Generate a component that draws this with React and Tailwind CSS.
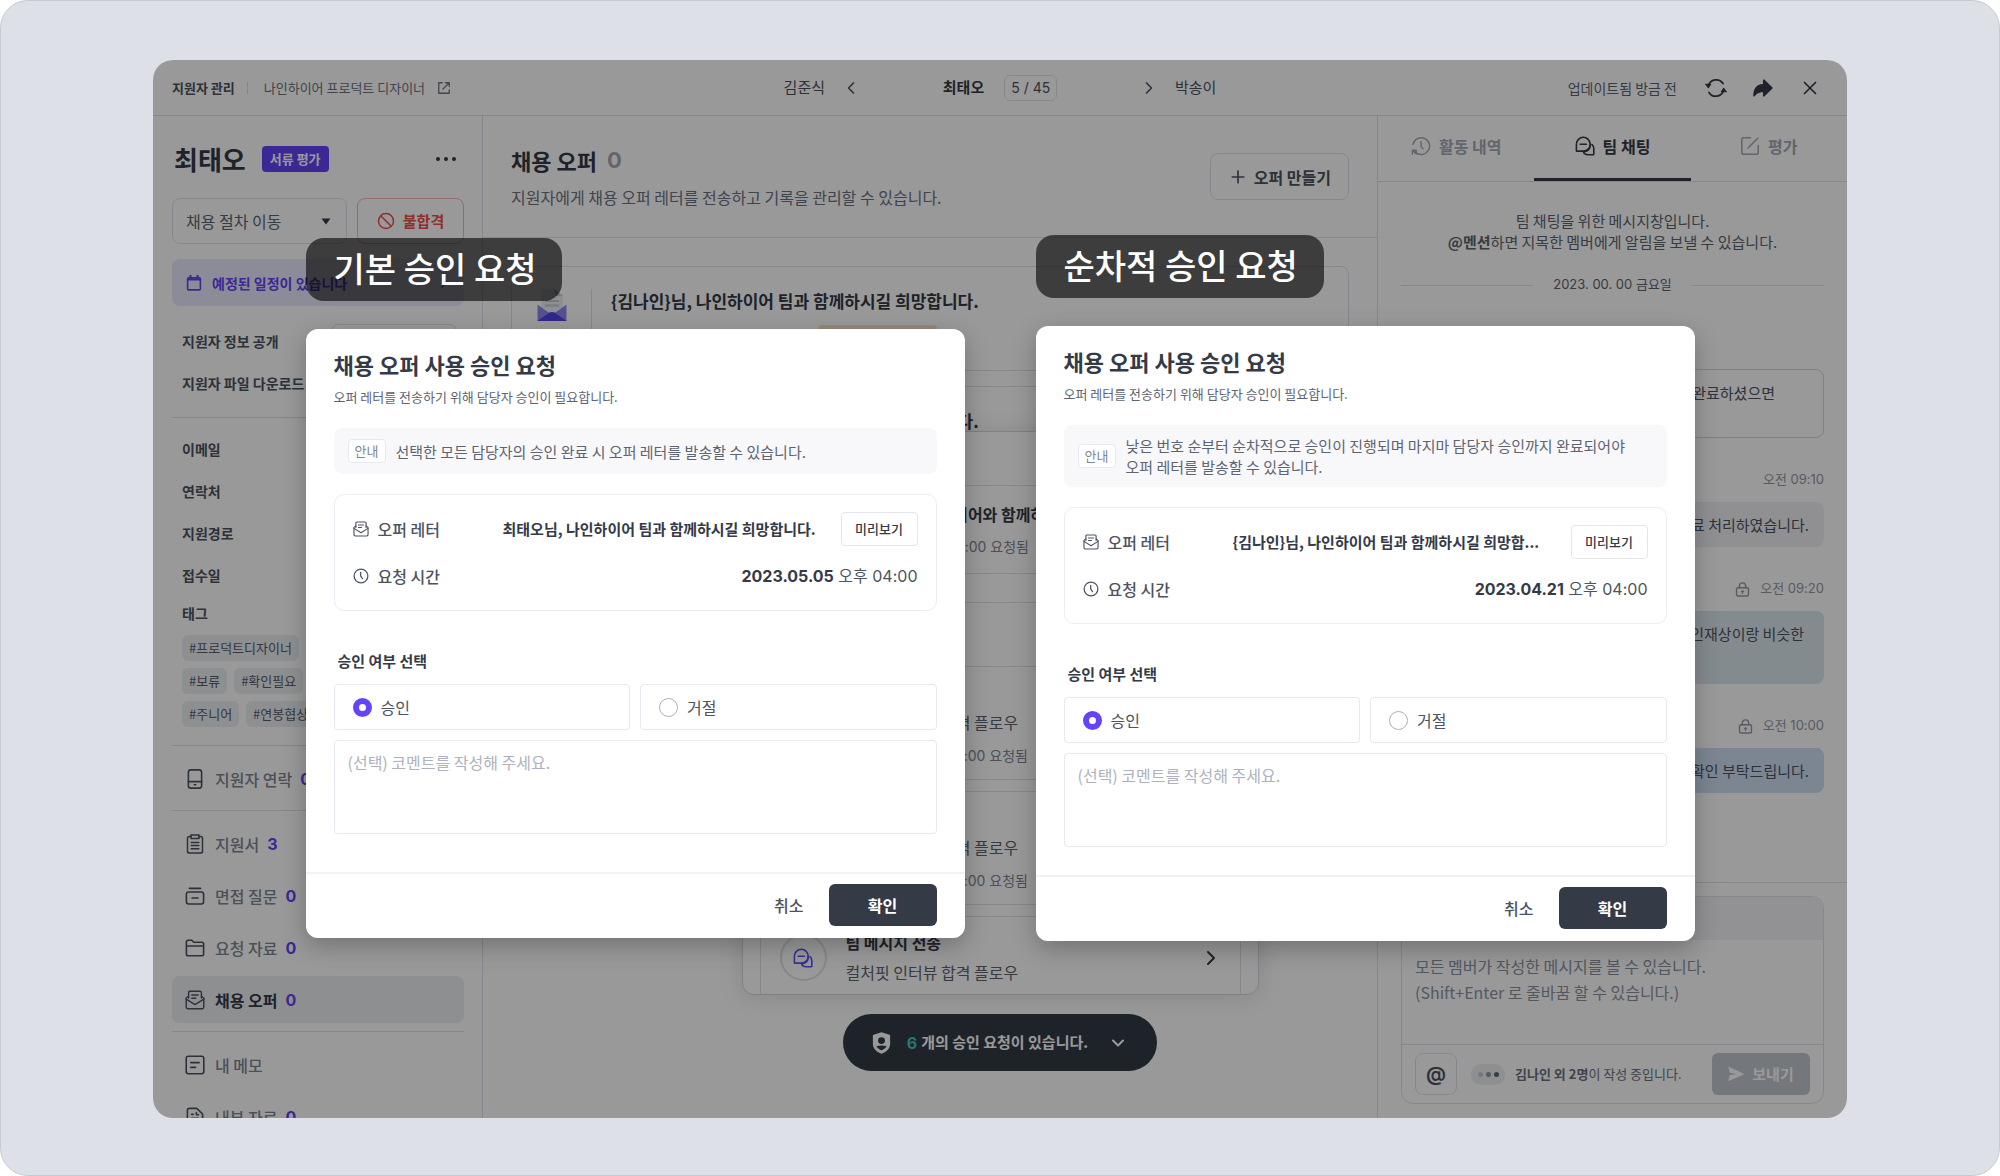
import React from "react";
import { Ban, ChevronDown, ChevronLeft, ChevronRight, Plus, X } from "lucide-react";
import { IoArrowRedo } from "react-icons/io5";

function Svg({ className = "size-5", children, width = 1.6 }) {
  return (
    <svg viewBox="0 0 20 20" className={className} fill="none" stroke="currentColor" strokeWidth={width} strokeLinecap="round" strokeLinejoin="round" aria-hidden="true">
      {children}
    </svg>
  );
}

const LetterIcon = ({ className }) => (
  <Svg className={className} width={1.4}>
    <path d="M3.6 8V2.6C3.6 1.7 4.2 1.2 5 1.2h10c.8 0 1.4.5 1.4 1.4V8" />
    <path d="M3.6 6.2 1.2 8v9c0 1 .7 1.700 1.700 1.700h14.200c1 0 1.700-.7 1.700-1.700V8l-2.400-1.800" />
    <path d="M1.2 9.2 10 14.6l8.8-5.4M6.8 5h6.4M6.8 8.2h4" />
  </Svg>
);
const ClockIcon = ({ className }) => (
  <Svg className={className}>
    <circle cx="10" cy="10" r="8.6" />
    <path d="M9.6 5.4v4.8l2.4 3" />
  </Svg>
);
const ChatIcon = ({ className }) => (
  <Svg className={className} width={1.6}>
    <path d="M1.400 14.800V8.200a6.900 6.900 0 1 1 6.900 6.900H1.800c-.2 0-.4-.1-.4-.3z" />
    <path d="M5.200 8.200h6.200M17 8.600c1.100 1 1.800 2.400 1.800 4v5.600c0 .3-.2.500-.5.500h-5.500c-1.700 0-3.200-.8-4.100-2M15.200 8.400c0 5-3 7-6 7.200" />
  </Svg>
);
const HistoryIcon = ({ className }) => (
  <Svg className={className} width={1.4}>
    <path d="M2 8.4A8.4 8.4 0 1 1 4.4 16.2" />
    <path d="M1.4 14.2h3.8v3.8zM1.4 14.2v4" fill="currentColor" />
    <path d="M10 5.6v4.8l2 2.4" />
  </Svg>
);
const EditIcon = ({ className }) => (
  <Svg className={className} width={1.5}>
    <path d="M10.5 1.8H3.6c-1 0-1.8.8-1.8 1.8v12.8c0 1 .8 1.8 1.8 1.8h12.8c1 0 1.8-.8 1.8-1.8V9.5M8 12l9.8-9.8" />
  </Svg>
);
const ExternalIcon = ({ className }) => (
  <Svg className={className} width={1.8}>
    <path d="M7.5 2.5h-5v15h15v-5M12 2.5h5.5V8M17 3 8.5 11.5" />
  </Svg>
);
const SyncIcon = ({ className }) => (
  <Svg className={className} width={1.6}>
    <path d="M3 8.2A7.4 7.4 0 0 1 16.4 6M17 11.8A7.4 7.4 0 0 1 3.6 14" />
    <path d="M.6 6.6h4.6L3 9.8zM19.4 13.4h-4.6l2.2-3.2z" fill="currentColor" strokeWidth="1" />
  </Svg>
);
const LockIcon = ({ className }) => (
  <Svg className={className} width={1.8}>
    <rect x="2" y="7.600" width="16" height="11" rx="2" />
    <path d="M5.800 7.600V5.400a4.200 4.200 0 0 1 8.400 0v2.200M10 12v3M8.600 12.400h2.800" />
  </Svg>
);
const PhoneIcon = ({ className }) => (
  <Svg className={className}>
    <rect x="3.4" y=".9" width="13.2" height="18.2" rx="2.4" />
    <path d="M3.4 12.6h13.2M9.2 15.8h1.6" />
  </Svg>
);
const ClipboardIcon = ({ className }) => (
  <Svg className={className} width={1.5}>
    <path d="M6 2.600H4.400c-1.100 0-1.900.8-1.900 1.900v12.700c0 1.100.8 1.900 1.900 1.900h11.200c1.100 0 1.900-.8 1.900-1.900V4.500c0-1.100-.8-1.900-1.900-1.900H14" />
    <path d="M6 1h8v3.600H6zM6.200 8.400h7.600M6.200 11.600h7.600M6.200 14.800h7.600" />
  </Svg>
);
const ArchiveIcon = ({ className }) => (
  <Svg className={className}>
    <rect x="1.4" y="6" width="17.2" height="12" rx="2.2" />
    <path d="M4.4 2.4h11.2M7 12h6" />
  </Svg>
);
const FolderIcon = ({ className }) => (
  <Svg className={className}>
    <path d="M1.4 8V4c0-1.1.8-1.8 1.8-1.8h3.6l2 2h8c1 0 1.8.8 1.8 1.8v10c0 1-.8 1.8-1.8 1.8H3.2c-1 0-1.8-.8-1.8-1.8V8h17.2" />
  </Svg>
);
const MemoIcon = ({ className }) => (
  <Svg className={className}>
    <rect x="1.2" y="1.2" width="17.6" height="17.6" rx="2.2" />
    <path d="M5.8 7.6h8.4M5.8 12.4h4.8" />
  </Svg>
);
const FileIcon = ({ className }) => (
  <Svg className={className}>
    <path d="M2.400 17V3.400c0-1.100.8-2 1.900-2h7.400l5.900 5.600v10c0 1.100-.8 2-1.900 2H4.300c-1.100 0-1.900-.9-1.900-2z" />
    <path d="M6.600 7.400h1.600M11.400 5.600v2.200h2.200M6.600 11.400h6.800" />
  </Svg>
);
const CalendarIcon = ({ className }) => (
  <Svg className={className} width={2}>
    <rect x="2" y="3.6" width="16" height="15" rx="1.4" />
    <path d="M2.600 5.600h14.800M5.600 1v3M14.400 1v3" strokeWidth="2.600" />
  </Svg>
);
const ShieldUserIcon = ({ className }) => (
  <svg viewBox="0 0 20 24" className={className} fill="currentColor" fillRule="evenodd" aria-hidden="true">
    <path d="M10 .4 19.400 3.400V13c0 5-4.400 9-9.400 10.600C5 22 .6 18 .6 13V3.400zM10 5.600a3.800 3.800 0 1 0 0 7.600 3.800 3.800 0 0 0 0-7.600zM4.400 15.600c1.400 2.400 3.400 3.600 5.600 4.400 2.200-.8 4.200-2 5.600-4.400-3.600-1.200-7.600-1.200-11.200 0z" />
  </svg>
);
const SendIcon = ({ className }) => (
  <svg viewBox="0 0 16 14" className={className} fill="currentColor" aria-hidden="true">
    <path d="M.4.6C.3.1.7-.1 1.100.1l14.300 6.300c.5.2.5.9 0 1.100L1.100 13.900c-.4.200-.8-.1-.7-.6l1.300-5L8.400 7 1.700 5.700z" />
  </svg>
);
const EnvelopeArt = () => (
  <svg viewBox="0 0 30 32" className="h-8 w-[30px]" aria-hidden="true">
    <path d="M4 0h14l8 7v18H4z" fill="#eceef2" />
    <path d="M18 0l8 7h-8z" fill="#c3c8d4" />
    <path d="M8 12h14M8 16.500h14" stroke="#c3c8d4" strokeWidth="2" />
    <path d="M.5 15.500 15 26l14.500-10.500V32H.5z" fill="#8d88f5" />
    <path d="M.5 32 12 23.800c1.800-1.200 4.200-1.200 6 0L29.500 32z" fill="#4f43e6" />
  </svg>
);

const NUM = "font-[Inter,'Noto_Sans_CJK_KR',sans-serif]";

function NavItem({ icon: Icon, label, count, active }) {
  return (
    <button type="button" className={`flex h-[47px] w-full shrink-0 items-center rounded-lg pl-[13px] text-left ${active ? "bg-[#eceef1] font-bold text-[#343a46]" : "font-medium text-[#7d8694]"}`}>
      <Icon className="size-5 text-[#4c5361]" />
      <span className="ml-2.5 text-base leading-6">{label}</span>
      {count !== undefined && <span className={`${NUM} ml-2 text-base leading-6 font-bold text-[#6444f8]`}>{count}</span>}
    </button>
  );
}

const Tag = ({ children }) => <span className="flex h-[26px] shrink-0 items-center rounded-md bg-[#edeef1] px-[7px] text-[13px] leading-5 text-[#555c6b]">{children}</span>;
const Rule = ({ className }) => <hr className={`shrink-0 border-t border-[#dcdfe6] ${className}`} />;
const InfoRow = ({ children }) => <div className="flex h-[42px] shrink-0 items-center pl-2.5 text-sm font-bold text-[#4c5361]">{children}</div>;

function Sidebar() {
  return (
    <aside className="flex w-[330px] shrink-0 flex-col overflow-hidden border-r border-[#dfe2ea] pt-[25px] pr-[18px] pl-[19px]">
      <div className="flex h-9 shrink-0 items-center pr-2">
        <h1 className="ml-0.5 text-[26px] leading-9 font-bold text-[#343a46]">최태오</h1>
        <span className="ml-4 flex h-[26px] items-center rounded bg-[#6444f8] px-2 text-[13px] leading-5 font-bold text-white">서류 평가</span>
        <button type="button" aria-label="더보기" className="ml-auto flex gap-1 text-[#343a46]">
          <i className="size-1 rounded-full bg-current" />
          <i className="size-1 rounded-full bg-current" />
          <i className="size-1 rounded-full bg-current" />
        </button>
      </div>
      <div className="mt-[21px] flex h-[46px] shrink-0 gap-2.5">
        <div className="relative flex-1">
          <select aria-label="채용 절차 이동" className="h-full w-full appearance-none rounded-lg border border-[#dfe2ea] bg-white px-[13px] text-base text-[#5d6471]">
            <option>채용 절차 이동</option>
          </select>
          <svg viewBox="0 0 10 7" className="absolute top-5 right-4 h-[7px] w-2.5 text-[#343a46]" fill="currentColor" aria-hidden="true"><path d="M.5.5h9L5 6.500z" /></svg>
        </div>
        <button type="button" className="flex w-[107px] items-center justify-center gap-2 rounded-lg border border-[#f5b5b3] text-[15px] font-bold text-[#ec5148]">
          <Ban className="size-[18px]" strokeWidth={2} />
          불합격
        </button>
      </div>
      <button type="button" className="mt-[15px] flex h-[47px] shrink-0 items-center rounded-lg bg-[#eae9fd] pl-3.5 text-sm font-bold text-[#6444f8]">
        <CalendarIcon className="size-4" />
        <span className="ml-2.5">예정된 일정이 있습니다</span>
        <ChevronRight className="mr-3 ml-auto size-4" />
      </button>
      <div className="mt-3.5 flex shrink-0 items-center justify-between pr-2">
        <InfoRow>지원자 정보 공개</InfoRow>
        <span className="h-[34px] w-[124px] rounded-md border border-[#dfe2ea]" />
      </div>
      <InfoRow>지원자 파일 다운로드</InfoRow>
      <Rule className="mt-[13px]" />
      <div className="mt-2.5 shrink-0">
        <InfoRow>이메일</InfoRow>
        <InfoRow>연락처</InfoRow>
        <InfoRow>지원경로</InfoRow>
        <InfoRow>접수일</InfoRow>
      </div>
      <div className="h-[34px] shrink-0 pl-2.5 text-sm leading-[34px] font-bold text-[#4c5361]">태그</div>
      <div className="mt-[5px] flex shrink-0 flex-col gap-[7px] pl-2.5">
        <div className="flex gap-[7px]"><Tag>#프로덕트디자이너</Tag></div>
        <div className="flex gap-[7px]"><Tag>#보류</Tag><Tag>#확인필요</Tag></div>
        <div className="flex gap-[7px]"><Tag>#주니어</Tag><Tag>#연봉협상</Tag></div>
      </div>
      <nav className="flex flex-col">
        <Rule className="mt-[18px] mb-[9px]" />
        <NavItem icon={PhoneIcon} label="지원자 연락" count={0} />
        <Rule className="mt-2 mb-[9px]" />
        <div className="flex shrink-0 flex-col gap-[5px]">
          <NavItem icon={ClipboardIcon} label="지원서" count={3} />
          <NavItem icon={ArchiveIcon} label="면접 질문" count={0} />
          <NavItem icon={FolderIcon} label="요청 자료" count={0} />
          <NavItem icon={LetterIcon} label="채용 오퍼" count={0} active />
        </div>
        <Rule className="mt-2 mb-[9px]" />
        <div className="flex shrink-0 flex-col gap-[5px]">
          <NavItem icon={MemoIcon} label="내 메모" />
          <NavItem icon={FileIcon} label="내부 자료" count={0} />
        </div>
      </nav>
    </aside>
  );
}

function Header() {
  return (
    <header className="grid h-14 shrink-0 grid-cols-[1fr_auto_1fr] items-center border-b border-[#dfe2ea] text-[#4c5361]">
      <div className="flex items-center pl-[19px] text-[13px]">
        <strong className="font-bold">지원자 관리</strong>
        <i className="mx-3 h-3 w-px bg-[#dfe2ea]" />
        <a href="#job" className="flex items-center gap-3 pl-1 text-[#6b7280]">
          나인하이어 프로덕트 디자이너
          <ExternalIcon className="size-3.5" />
        </a>
      </div>
      <div className="flex items-center text-[15px]">
        <a href="#prev">김준식</a>
        <button type="button" aria-label="이전 지원자" className="ml-4"><ChevronLeft className="size-5" /></button>
        <div className="flex w-[278px] items-center justify-center gap-5">
          <strong className="font-bold text-[#343a46]">최태오</strong>
          <span className={`${NUM} rounded-md border border-[#dfe2ea] px-1.5 text-sm leading-6`}>5 / 45</span>
        </div>
        <button type="button" aria-label="다음 지원자" className="mr-4"><ChevronRight className="size-5" /></button>
        <a href="#next">박송이</a>
      </div>
      <div className="flex items-center justify-end pr-[26px] text-[#343a46]">
        <span className="text-sm text-[#5d6471]">업데이트됨 방금 전</span>
        <button type="button" aria-label="새로고침" className="ml-7"><SyncIcon className="size-[22px]" /></button>
        <button type="button" aria-label="공유" className="ml-6"><IoArrowRedo className="size-6" /></button>
        <button type="button" aria-label="닫기" className="ml-6"><X className="size-[22px]" strokeWidth={1.8} /></button>
      </div>
    </header>
  );
}

function OfferCard() {
  return (
    <article className="flex h-[105px] rounded-lg border border-[#dfe2ea] pt-[22px]">
      <div className="flex w-20 justify-center border-r border-[#dfe2ea]"><EnvelopeArt /></div>
      <div className="ml-[19px]">
        <h3 className="text-[17px] leading-6 font-bold text-[#343a46]">{"{김나인}님, 나인하이어 팀과 함께하시길 희망합니다."}</h3>
        <span className="mt-3 ml-[207px] block h-6 w-[119px] rounded bg-[#fbe3cb]" />
      </div>
    </article>
  );
}

function Main() {
  return (
    <main className="min-w-0 flex-1">
      <section className="flex items-start justify-between border-b border-[#dfe2ea] px-7 pt-[30px] pb-7">
        <div>
          <h2 className="flex items-center gap-2.5 text-[22px] leading-7 font-bold text-[#343a46]">
            채용 오퍼 <span className={`${NUM} text-[#a3a9b5]`}>0</span>
          </h2>
          <p className="mt-[11px] text-base leading-6 text-[#6b7280]">지원자에게 채용 오퍼 레터를 전송하고 기록을 관리할 수 있습니다.</p>
        </div>
        <button type="button" className="mt-[7px] flex h-[47px] items-center gap-1.5 rounded-lg border border-[#dfe2ea] px-[17px] text-base font-bold text-[#4c5361]">
          <Plus className="size-5" strokeWidth={2} />
          오퍼 만들기
        </button>
      </section>
      <div className="flex flex-col gap-[15px] px-7 pt-7">
        <OfferCard />
        <OfferCard />
      </div>
    </main>
  );
}

function TabButton({ icon: Icon, label, active }) {
  return (
    <button type="button" role="tab" aria-selected={!!active} className={`flex flex-1 items-center justify-center gap-2 border-b-[3px] pb-[3px] text-base font-bold ${active ? "border-[#343a46] text-[#343a46]" : "border-transparent text-[#a3a9b5]"}`}>
      <Icon className="size-5" />
      {label}
    </button>
  );
}

function Message({ time, locked, className, children }) {
  return (
    <div className="flex flex-col">
      {time && (
        <div className={`${NUM} mb-2.5 flex h-6 items-center justify-end gap-2.5 text-[13px] text-[#9299a6]`}>
          {locked && <LockIcon className="size-[15px]" />}
          {time}
        </div>
      )}
      <p className={`rounded-lg px-[15px] py-3 text-right text-[15px] leading-[21px] text-[#4c5361] ${className}`}>{children}</p>
    </div>
  );
}

function ChatPanel() {
  return (
    <section className="flex w-[470px] shrink-0 flex-col border-l border-[#dfe2ea]">
      <div role="tablist" className="flex h-[66px] shrink-0 border-b border-[#dfe2ea]">
        <TabButton icon={HistoryIcon} label="활동 내역" />
        <TabButton icon={ChatIcon} label="팀 채팅" active />
        <TabButton icon={EditIcon} label="평가" />
      </div>
      <div className="flex-1 px-[23px] pt-7">
        <p className="text-center text-[15px] leading-[21px] text-[#5d6471]">
          팀 채팅을 위한 메시지창입니다.<br /><strong className="font-bold">@멘션</strong>하면 지목한 멤버에게 알림을 보낼 수 있습니다.
        </p>
        <div className={`${NUM} mt-[21px] flex h-6 items-center gap-5 text-[13px] text-[#5d6471]`}>
          <i className="h-px flex-1 bg-[#dcdfe6]" />
          2023. 00. 00 금요일
          <i className="h-px flex-1 bg-[#dcdfe6]" />
        </div>
        <div className="mt-[72px] flex flex-col gap-[30px]">
          <Message className="h-[69px] border border-[#d4d7e0] pr-12!">서류 검토를 완료하셨으면</Message>
          <Message time="오전 09:10" className="bg-[#f0f1f4]">검토 완료 처리하였습니다.</Message>
          <Message time="오전 09:20" locked className="h-[73px] bg-[#dce8ed] pr-5!">우리 회사 인재상이랑 비슷한</Message>
          <Message time="오전 10:00" locked className="bg-[#cfe0f3]">내용 확인 부탁드립니다.</Message>
        </div>
      </div>
      <div className="border-t border-[#dfe2ea] px-[23px] pt-[13px] pb-3.5">
        <form className="overflow-hidden rounded-xl border border-[#dfe2ea]">
          <div className="h-[43px] bg-[#f4f4f8]" />
          <textarea aria-label="메시지" className="block h-[104px] w-full resize-none px-[13px] pt-[13px] text-base leading-[26px] placeholder:text-[#8b93a1]" placeholder={"모든 멤버가 작성한 메시지를 볼 수 있습니다.\n(Shift+Enter 로 줄바꿈 할 수 있습니다.)"} />
          <div className="flex items-center border-t border-[#dfe2ea] px-[13px] py-2">
            <button type="button" aria-label="멘션" className="size-[42px] rounded-lg border border-[#dfe2ea] font-[Inter,sans-serif] text-xl leading-6 font-semibold text-[#4c5361]">@</button>
            <span className="ml-3.5 flex h-[21px] w-[34px] items-center justify-center gap-[3px] rounded-full bg-[#edeef1]">
              <i className="size-[5px] rounded-full bg-[#c3c8d1]" />
              <i className="size-[5px] rounded-full bg-[#9299a6]" />
              <i className="size-[5px] rounded-full bg-[#5d6471]" />
            </span>
            <p className="ml-2.5 text-[13px] text-[#6b7280]"><strong className="font-bold">김나인 외 2명</strong>이 작성 중입니다.</p>
            <button type="button" className="ml-auto flex h-[42px] w-[98px] items-center justify-center gap-2 rounded-md bg-[#c1c6ce] text-[15px] font-bold text-white">
              <SendIcon className="h-3.5 w-4" />
              보내기
            </button>
          </div>
        </form>
      </div>
    </section>
  );
}

function RequestCard() {
  return (
    <article className="flex h-[114px] shrink-0 rounded-lg border border-[#dfe2ea] pt-[17px] pr-[17px] pl-[19px]">
      <span className="flex size-[47px] items-center justify-center rounded-full border-2 border-[#dfe2ea] text-[#5a4ff0]"><ChatIcon className="size-5" /></span>
      <div className="ml-[19px]">
        <h4 className="-mt-1 text-base leading-6 font-bold text-[#343a46]">팀 메시지 전송</h4>
        <p className="mt-1.5 text-base leading-6 text-[#5d6471]">컬처핏 인터뷰 합격 플로우</p>
        <p className={`${NUM} mt-3 text-sm leading-5 text-[#7d8694]`}>2023.05.05 오전 9:00 요청됨</p>
      </div>
      <ChevronRight className="mt-3 ml-auto size-6 text-[#343a46]" />
    </article>
  );
}

function ApprovalQueue() {
  return (
    <div className="absolute inset-x-0 bottom-[47px] flex flex-col items-center gap-[19px]">
      <div className="flex h-[564px] w-[517px] flex-col overflow-hidden rounded-xl border border-[#d4d7e0] bg-white px-[17px] shadow-[0_2px_24px_rgba(0,0,0,0.12)]">
        <div className="-mx-[17px] h-[54px] shrink-0 border-b border-[#dfe2ea]" />
        <article className="h-[88px] shrink-0 border-x border-b border-[#dfe2ea] pt-4 pl-[86px]">
          <h4 className="text-base leading-6 font-bold text-[#343a46]">최태오님 나인하이어와 함께하시길 희망합니다.</h4>
          <p className={`${NUM} mt-[11px] text-sm leading-5 text-[#7d8694]`}>2023.05.05 오전 9:00 요청됨</p>
        </article>
        <div className="-mx-[17px] mt-7 h-16 shrink-0 border-t border-[#dfe2ea]" />
        <div className="flex flex-col gap-[11px]">
          <RequestCard />
          <RequestCard />
          <RequestCard />
        </div>
      </div>
      <button type="button" className="flex h-[57px] items-center rounded-full bg-[#333b45] px-[29px] text-[15px] font-bold text-white">
        <ShieldUserIcon className="h-[22px] w-[19px]" />
        <span className={`${NUM} ml-4 text-base text-[#45c4c4]`}>6</span>
        <span className="ml-1">개의 승인 요청이 있습니다.</span>
        <ChevronDown className="ml-5 size-5" strokeWidth={2.5} />
      </button>
    </div>
  );
}

function Choice({ name, checked, children }) {
  return (
    <label className="flex h-[46px] items-center gap-[9px] rounded border border-[#e8e9f0] pl-[18px] text-base text-[#4c5361]">
      <input type="radio" name={name} defaultChecked={checked} className="size-[19px] appearance-none rounded-full border border-[#a9afbc] checked:border-[6px] checked:border-[#6444f8]" />
      {children}
    </label>
  );
}

function ApprovalDialog({ name, notice, letter, date, roomy }) {
  return (
    <form role="dialog" aria-label="채용 오퍼 사용 승인 요청" className="w-[659px] rounded-xl bg-white pt-[21px] text-[#343a46] shadow-[0_8px_24px_rgba(0,0,0,0.25)]">
      <div className="px-7">
        <h2 className="text-[22px] leading-7 font-bold">채용 오퍼 사용 승인 요청</h2>
        <p className="mt-[9px] text-[13px] leading-5 text-[#5d6471]">오퍼 레터를 전송하기 위해 담당자 승인이 필요합니다.</p>
        <div className="mt-[21px] flex items-center gap-2.5 rounded-lg bg-[#f8f8fb] px-3.5 py-2.5">
          <span className="my-px flex h-6 w-[38px] shrink-0 items-center justify-center rounded border border-[#e8e9f0] bg-white text-[13px] leading-5 text-[#7d8694]">안내</span>
          <p className="text-[15px] leading-[21px] whitespace-pre-line text-[#5d6471]">{notice}</p>
        </div>
        <dl className="mt-5 rounded-[10px] border border-[#ececf3] px-[18px] pt-[17px] pb-[22px] text-base leading-6">
          <div className="flex items-center">
            <dt className="flex items-center gap-[9px] font-medium text-[#4c5361]"><LetterIcon className="size-4" />오퍼 레터</dt>
            <dd className="ml-auto flex items-center gap-4">
              <strong className="w-[322px] truncate text-[15px] font-bold">{letter}</strong>
              <button type="button" className="h-[34px] w-[77px] rounded border border-[#e4e6ee] text-[13px] font-medium">미리보기</button>
            </dd>
          </div>
          <div className="mt-[18px] flex items-center justify-between">
            <dt className="flex items-center gap-[9px] font-medium text-[#4c5361]"><ClockIcon className="size-4" />요청 시간</dt>
            <dd className={`${NUM} text-[#4c5361]`}><strong className="font-bold text-[#343a46]">{date}</strong> 오후 04:00</dd>
          </div>
        </dl>
        <fieldset className="mt-[38px]">
          <legend className="ml-1 text-[15px] leading-6 font-bold">승인 여부 선택</legend>
          <div className="mt-[11px] grid grid-cols-2 gap-2.5">
            <Choice name={name} checked>승인</Choice>
            <Choice name={name}>거절</Choice>
          </div>
        </fieldset>
        <textarea aria-label="코멘트" placeholder="(선택) 코멘트를 작성해 주세요." className="mt-2.5 block h-[94px] w-full resize-none rounded border border-[#e8e9f0] px-[13px] py-[9px] text-base leading-6 placeholder:text-[#adb2be]" />
      </div>
      <div className={`flex items-center justify-end gap-[25px] border-t-2 border-[#f1f2f6] px-7 pt-2.5 pb-3 ${roomy ? "mt-[38px]" : "mt-7"}`}>
        <button type="button" className="text-base leading-6 font-medium text-[#4c5361]">취소</button>
        <button type="submit" className="h-[42px] w-[108px] rounded-md bg-[#343a46] text-base font-bold text-white">확인</button>
      </div>
    </form>
  );
}

const Caption = ({ children }) => <h2 className="rounded-[18px] bg-black/60 pt-1.5 pr-[26px] pb-[9px] pl-7 text-[34px] leading-[48px] font-medium text-white">{children}</h2>;

export default function App() {
  return (
    <div className="h-screen bg-white font-['Noto_Sans_CJK_KR',sans-serif]">
      <div className="relative flex h-full flex-col rounded-[28px] border border-[#c6cad2] bg-[#dde0e6] px-[152px] pt-[59px] pb-[57px]">
        <div className="relative flex min-h-0 flex-1 flex-col overflow-hidden rounded-[20px] bg-white">
          <Header />
          <div className="flex min-h-0 flex-1">
            <Sidebar />
            <Main />
            <ChatPanel />
          </div>
          <ApprovalQueue />
          <div className="absolute inset-0 bg-black/40" />
        </div>
        <div className="absolute inset-0 flex items-center justify-center gap-[71px]">
          <div className="flex flex-col items-start gap-7">
            <Caption>기본 승인 요청</Caption>
            <ApprovalDialog name="basic" roomy notice="선택한 모든 담당자의 승인 완료 시 오퍼 레터를 발송할 수 있습니다." letter="최태오님, 나인하이어 팀과 함께하시길 희망합니다." date="2023.05.05" />
          </div>
          <div className="flex flex-col items-start gap-7">
            <Caption>순차적 승인 요청</Caption>
            <ApprovalDialog name="sequential" notice={"낮은 번호 순부터 순차적으로 승인이 진행되며 마지마 담당자 승인까지 완료되어야\n오퍼 레터를 발송할 수 있습니다."} letter="{김나인}님, 나인하이어 팀과 함께하시길 희망합..." date="2023.04.21" />
          </div>
        </div>
      </div>
    </div>
  );
}
